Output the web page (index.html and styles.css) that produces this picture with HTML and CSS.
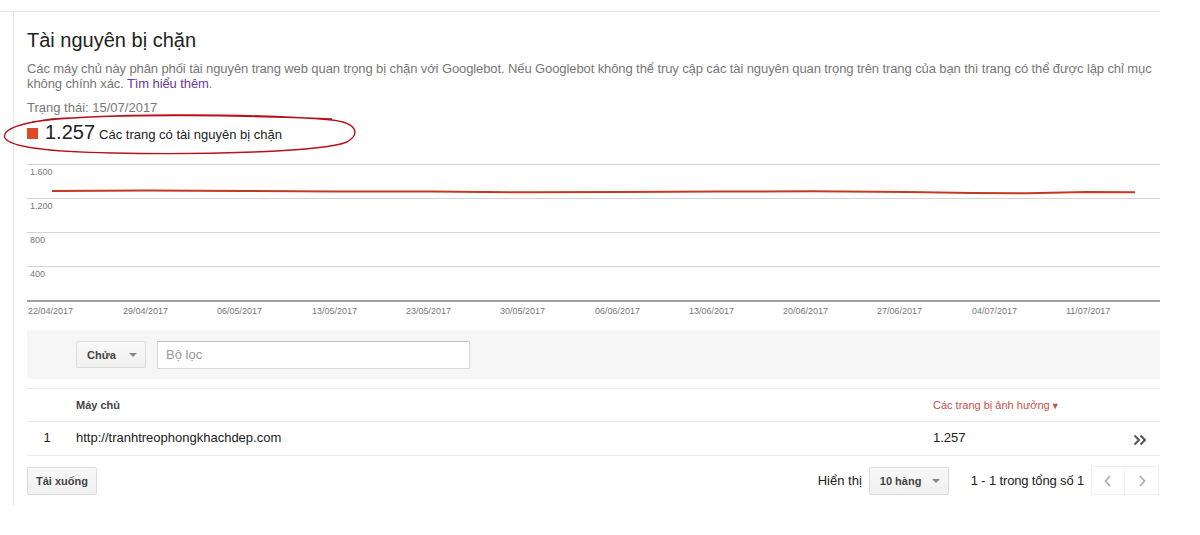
FILE: index.html
```html
<!DOCTYPE html>
<html>
<head>
<meta charset="utf-8">
<title>Tài nguyên bị chặn</title>
<link rel="stylesheet" href="styles.css">
</head>
<body>

<div class="page">
  <div class="panel">
    <h1 class="title">Tài nguyên bị chặn</h1>
    <p class="desc">Các máy chủ này phân phối tài nguyên trang web quan trọng bị chặn với Googlebot. Nếu Googlebot không thể truy cập các tài nguyên quan trọng trên trang của bạn thì trang có thể được lập chỉ mục không chính xác. <a href="#">Tìm hiểu thêm</a>.</p>
    <div class="status">Trạng thái: 15/07/2017</div>
    <div class="total">
      <span class="swatch"></span>
      <span class="total-num">1.257</span>
      <span class="total-label">Các trang có tài nguyên bị chặn</span>
    </div>

    <!-- chart: grid, labels and the series line -->
    <svg class="chart" width="1133" height="156" viewBox="0 0 1133 156">
      <g class="grid">
        <line x1="0" y1="1.5" x2="1133" y2="1.5"/>
        <line x1="0" y1="35.5" x2="1133" y2="35.5"/>
        <line x1="0" y1="69.5" x2="1133" y2="69.5"/>
        <line x1="0" y1="103.5" x2="1133" y2="103.5"/>
      </g>
      <line class="axis" x1="0" y1="138" x2="1133" y2="138"/>
      <g class="ylabels">
        <text x="3" y="12">1.600</text>
        <text x="3" y="46">1.200</text>
        <text x="3" y="80">800</text>
        <text x="3" y="114">400</text>
      </g>
      <g class="xlabels">
        <text x="1" y="151">22/04/2017</text>
        <text x="96" y="151">29/04/2017</text>
        <text x="190" y="151">06/05/2017</text>
        <text x="285" y="151">13/05/2017</text>
        <text x="379" y="151">23/05/2017</text>
        <text x="473" y="151">30/05/2017</text>
        <text x="568" y="151">06/06/2017</text>
        <text x="662" y="151">13/06/2017</text>
        <text x="756" y="151">20/06/2017</text>
        <text x="850" y="151">27/06/2017</text>
        <text x="945" y="151">04/07/2017</text>
        <text x="1039" y="151">11/07/2017</text>
      </g>
      <polyline class="series" points="25,28 120,27.5 215,28 310,28.5 405,28.5 500,29.3 595,29 690,28.6 785,28.2 880,29 945,30 1000,30.2 1060,29 1108,29.3"/>
    </svg>

    <div class="filter-bar">
      <button class="select-btn filter-op">Chửa <span class="caret"></span></button>
      <input class="filter-input" type="text" placeholder="Bộ lọc">
    </div>

    <table class="hosts">
      <colgroup>
        <col class="c-num"><col class="c-host"><col class="c-count"><col class="c-go">
      </colgroup>
      <thead>
        <tr>
          <th></th>
          <th class="host">Máy chủ</th>
          <th class="sorted">Các trang bị ảnh hưởng<span class="sort-arrow">▼</span></th>
          <th></th>
        </tr>
      </thead>
      <tbody>
        <tr>
          <td class="num">1</td>
          <td class="host">http://tranhtreophongkhachdep.com</td>
          <td>1.257</td>
          <td class="go"><svg class="go-icon" width="14" height="12" viewBox="0 0 14 12"><path d="M1.5 1.5l4.5 4.5-4.5 4.5M7.5 1.5l4.5 4.5-4.5 4.5" fill="none" stroke="#555" stroke-width="2"/></svg></td>
        </tr>
      </tbody>
    </table>

    <div class="footer">
      <button class="plain-btn">Tải xuống</button>
      <div class="paging">
        <span class="show-label">Hiển thị</span>
        <button class="select-btn rows-select">10 hàng <span class="caret"></span></button>
        <span class="count">1 - 1 trong tổng số 1</span>
        <div class="pager">
          <button class="page-btn"><svg width="10" height="14" viewBox="0 0 10 14"><path d="M7 2L2.5 7 7 12" fill="none" stroke="#aaa" stroke-width="1.6"/></svg></button>
          <button class="page-btn"><svg width="10" height="14" viewBox="0 0 10 14"><path d="M3 2l4.5 5L3 12" fill="none" stroke="#aaa" stroke-width="1.6"/></svg></button>
        </div>
      </div>
    </div>
  </div>

  <!-- hand drawn marker round the total -->
  <svg class="marker" width="370" height="50" viewBox="0 0 370 50">
    <path d="M30 8 C 90 -1, 250 -1, 330 6 C 356 9, 358 20, 345 28 C 320 38, 200 41, 110 39 C 50 38, 8 33, 3 24 C -1 15, 20 9, 50 5 C 120 0, 240 1, 330 5" fill="none" stroke="#b5121b" stroke-width="1.4"/>
  </svg>
</div>

</body>
</html>
```

FILE: styles.css
```css
body {
  margin: 0;
  background-color: #ffffff;
  font-family: "Liberation Sans", Arial, sans-serif;
  color: #222222;
}

.page {
  position: relative;
  width: 1160px;
  margin-top: 11px;
  border-top: 1px solid #e6e6e6;
}

.panel {
  margin-left: 13px;
  border-left: 1px solid #e6e6e6;
  padding: 16px 0 10px 13px;
}

.title {
  margin: 0;
  font-size: 20px;
  line-height: 24px;
  font-weight: normal;
  color: #222222;
}

.desc {
  margin: 9px 0 0 0;
  font-size: 13px;
  line-height: 15px;
  letter-spacing: -0.1px;
  color: #777777;
}

.desc a {
  color: #6a3aa0;
  text-decoration: none;
}

.status {
  margin-top: 9px;
  font-size: 13px;
  line-height: 16px;
  color: #777777;
}

.total {
  display: flex;
  align-items: baseline;
  margin-top: 4px;
  height: 24px;
}

.swatch {
  display: inline-block;
  width: 11px;
  height: 11px;
  margin-right: 7px;
  background-color: #dd4b25;
}

.total-num {
  font-size: 20px;
  line-height: 24px;
  color: #222222;
  margin-right: 4px;
}

.total-label {
  font-size: 13px;
  color: #222222;
}

.chart {
  display: block;
  margin-top: 19px;
}

.chart .grid line {
  stroke: #d4d4d4;
  stroke-width: 1;
}

.chart .axis {
  stroke: #a0a0a0;
  stroke-width: 2;
}

.chart text {
  font-family: "Liberation Sans", Arial, sans-serif;
  font-size: 9px;
  fill: #777777;
}

.chart .series {
  fill: none;
  stroke: #c23a22;
  stroke-width: 2;
}

.filter-bar {
  display: flex;
  align-items: center;
  height: 49px;
  margin-top: 11px;
  padding-left: 49px;
  background-color: #f6f6f6;
}

.select-btn {
  display: flex;
  align-items: center;
  justify-content: space-between;
  height: 27px;
  padding: 0 8px 0 10px;
  background: linear-gradient(#f8f8f8, #f0f0f0);
  border: 1px solid #dcdcdc;
  border-radius: 2px;
  font-family: "Liberation Sans", Arial, sans-serif;
  font-size: 11px;
  font-weight: bold;
  color: #444444;
}

.caret {
  width: 0;
  height: 0;
  border-left: 4px solid transparent;
  border-right: 4px solid transparent;
  border-top: 4px solid #888888;
}

.filter-op {
  width: 70px;
}

.filter-input {
  width: 313px;
  height: 28px;
  box-sizing: border-box;
  margin-left: 11px;
  padding: 0 8px;
  border: 1px solid #d9d9d9;
  border-top-color: #c0c0c0;
  font-family: "Liberation Sans", Arial, sans-serif;
  font-size: 13px;
  color: #222222;
  background-color: #ffffff;
}

.filter-input::placeholder {
  color: #999999;
}

.hosts {
  width: 1133px;
  margin-top: 9px;
  border-collapse: collapse;
  table-layout: fixed;
  font-size: 13px;
}

.c-num { width: 40px; }
.c-count { width: 187px; }
.c-go { width: 40px; }

.hosts th {
  height: 32px;
  padding: 0;
  text-align: left;
  font-size: 11px;
  font-weight: bold;
  color: #444444;
  border-top: 1px solid #ebebeb;
  border-bottom: 1px solid #ebebeb;
}

.hosts th.sorted {
  font-weight: normal;
  color: #c8504a;
}

.sort-arrow {
  font-size: 9px;
  margin-left: 1px;
}

.hosts td {
  height: 34px;
  padding: 0 0 2px 0;
  box-sizing: border-box;
  color: #222222;
  border-bottom: 1px solid #ebebeb;
}

.hosts .host {
  padding-left: 9px;
}

.hosts td.num {
  text-align: center;
}

.hosts td.go {
  padding: 2px 0 0 13px;
  line-height: 0;
}

.go-icon {
  vertical-align: middle;
}

.footer {
  display: flex;
  justify-content: space-between;
  align-items: center;
  margin-top: 10px;
  padding-right: 1px;
}

.plain-btn {
  height: 28px;
  width: 70px;
  padding: 0;
  background: linear-gradient(#f8f8f8, #f0f0f0);
  border: 1px solid #dcdcdc;
  border-radius: 2px;
  font-family: "Liberation Sans", Arial, sans-serif;
  font-size: 11px;
  font-weight: bold;
  color: #444444;
}

.paging {
  display: flex;
  align-items: center;
  font-size: 13px;
  color: #222222;
}

.show-label {
  margin-right: 7px;
}

.rows-select {
  width: 80px;
  height: 28px;
  margin-right: 22px;
}

.count {
  margin-right: 7px;
  letter-spacing: -0.15px;
}

.pager {
  display: flex;
}

.page-btn {
  display: flex;
  align-items: center;
  justify-content: center;
  width: 34px;
  height: 29px;
  padding: 0;
  background-color: #ffffff;
  border: 1px solid #f0f0f0;
}

.page-btn + .page-btn {
  border-left: none;
}

.marker {
  position: absolute;
  left: 2px;
  top: 102px;
  pointer-events: none;
}
```
